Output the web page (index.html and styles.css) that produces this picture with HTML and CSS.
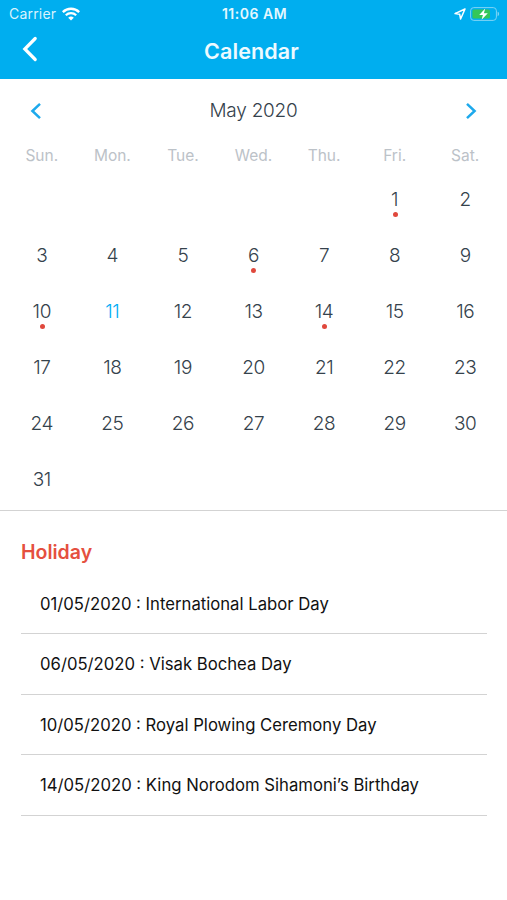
FILE: index.html
```
<!DOCTYPE html>
<html lang="en">
<head>
    <meta charset="UTF-8">
    <meta name="viewport" content="width=device-width, initial-scale=1.0">
    <title>Calendar</title>
    <link rel="stylesheet" href="styles.css">
</head>
<body>
    <header class="header">
        <div class="status-bar">
            <div class="status-left">
                <span class="carrier">Carrier</span>
                <svg class="wifi-icon" viewBox="0 0 18 14" width="18" height="14">
                    <path d="M.8 5.1a11.8 11.8 0 0 1 16.4 0" fill="none" stroke="currentColor" stroke-width="2.5"/>
                    <path d="M3.8 8.3a7.5 7.5 0 0 1 10.4 0" fill="none" stroke="currentColor" stroke-width="2.2"/>
                    <path d="M9 13.6L6.2 10.8a4 4 0 0 1 5.6 0z" fill="currentColor"/>
                </svg>
            </div>
            <span class="clock">11:06 AM</span>
            <div class="status-right">
                <svg class="location-icon" viewBox="0 0 12 12" width="12" height="12">
                    <path d="M11 1L1 5.6l4.7.7.9 4.7z" fill="none" stroke="currentColor" stroke-width="1.5" stroke-linejoin="round"/>
                </svg>
                <svg class="battery-icon" viewBox="0 0 30 14" width="30" height="14">
                    <rect x=".6" y=".6" width="25.8" height="12.8" rx="3.2" fill="none" stroke="#7fd4f5" stroke-width="1"/>
                    <rect x="2.4" y="2.4" width="17.6" height="9.2" rx="1.6" fill="#34c759"/>
                    <path d="M27.6 4.8c2 .6 2 3.8 0 4.4z" fill="#7fd4f5"/>
                    <path d="M15.2 1.4L9.2 7.9h3.7L11.6 12.8 17.8 6.2h-3.9z" fill="#fff"/>
                </svg>
            </div>
        </div>
        <div class="nav-bar">
            <button class="back-button" aria-label="Back">
                <svg viewBox="0 0 16 26" width="16" height="26">
                    <path d="M13.2 2.5L2.8 13l10.4 10.5" fill="none" stroke="currentColor" stroke-width="3.2" stroke-linecap="round"/>
                </svg>
            </button>
            <h1 class="title">Calendar</h1>
        </div>
    </header>

    <main>
        <section class="calendar">
            <div class="month-bar">
                <button class="month-button" aria-label="Previous month">
                    <svg viewBox="0 0 12 18" width="12" height="18">
                        <path d="M10 1.8L2.4 9l7.6 7.2" fill="none" stroke="currentColor" stroke-width="2.5"/>
                    </svg>
                </button>
                <span class="month">May 2020</span>
                <button class="month-button" aria-label="Next month">
                    <svg viewBox="0 0 12 18" width="12" height="18">
                        <path d="M2 1.8L9.6 9 2 16.2" fill="none" stroke="currentColor" stroke-width="2.5"/>
                    </svg>
                </button>
            </div>
            <div class="weekdays">
                <span>Sun.</span>
                <span>Mon.</span>
                <span>Tue.</span>
                <span>Wed.</span>
                <span>Thu.</span>
                <span>Fri.</span>
                <span>Sat.</span>
            </div>
            <div class="days">
                <span class="day first marked">1</span>
                <span class="day">2</span>
                <span class="day">3</span>
                <span class="day">4</span>
                <span class="day">5</span>
                <span class="day marked">6</span>
                <span class="day">7</span>
                <span class="day">8</span>
                <span class="day">9</span>
                <span class="day marked">10</span>
                <span class="day today">11</span>
                <span class="day">12</span>
                <span class="day">13</span>
                <span class="day marked">14</span>
                <span class="day">15</span>
                <span class="day">16</span>
                <span class="day">17</span>
                <span class="day">18</span>
                <span class="day">19</span>
                <span class="day">20</span>
                <span class="day">21</span>
                <span class="day">22</span>
                <span class="day">23</span>
                <span class="day">24</span>
                <span class="day">25</span>
                <span class="day">26</span>
                <span class="day">27</span>
                <span class="day">28</span>
                <span class="day">29</span>
                <span class="day">30</span>
                <span class="day">31</span>
            </div>
        </section>

        <section class="holidays">
            <h2 class="holidays-title">Holiday</h2>
            <ul class="holiday-list">
                <li>01/05/2020 : International Labor Day</li>
                <li>06/05/2020 : Visak Bochea Day</li>
                <li>10/05/2020 : Royal Plowing Ceremony Day</li>
                <li>14/05/2020 : King Norodom Sihamoni’s Birthday</li>
            </ul>
        </section>
    </main>
</body>
</html>
```
FILE: styles.css
```
* {
    margin: 0;
    padding: 0;
    box-sizing: border-box;
}

body {
    font-family: Inter, "Liberation Sans", sans-serif;
    background: #fff;
    min-height: 100vh;
}

button {
    border: none;
    background: none;
    cursor: pointer;
}

svg {
    display: block;
}

.header {
    height: 79px;
    background: #00aeef;
    color: #fff;
}

.status-bar {
    display: grid;
    grid-template-columns: 1fr auto 1fr;
    align-items: center;
    height: 27px;
    padding: 0 7px 0 9px;
    font-size: 14px;
}

.status-left,
.status-right {
    display: flex;
    align-items: center;
}

.status-left {
    gap: 6px;
}

.status-right {
    justify-content: flex-end;
    gap: 4px;
}

.carrier {
    letter-spacing: 0.2px;
    color: #d9f3fd;
}

.clock {
    font-size: 14px;
    font-weight: 600;
    letter-spacing: 0.5px;
    color: #e4f7fe;
}

.nav-bar {
    display: grid;
    grid-template-columns: 1fr auto 1fr;
    align-items: center;
    height: 48px;
    padding: 0 26px 0 22px;
}

.back-button {
    justify-self: start;
    padding-bottom: 4px;
    color: #fff;
}

.title {
    font-size: 21.5px;
    font-weight: 600;
    letter-spacing: 0.1px;
    color: #eefaff;
}

.calendar {
    height: 432px;
    border-bottom: 1px solid #d3d3d3;
}

.month-bar {
    display: flex;
    align-items: center;
    justify-content: space-between;
    height: 63px;
    padding: 0 30px;
}

.month-button {
    color: #1da9ec;
}

.month {
    font-size: 19px;
    font-weight: 300;
    letter-spacing: -0.25px;
    color: #35424c;
}

.weekdays,
.days {
    display: grid;
    grid-template-columns: repeat(7, 1fr);
    padding: 0 6.5px;
    text-align: center;
}

.weekdays {
    height: 29px;
    line-height: 28px;
    font-size: 15.5px;
    color: #bcc2c8;
}

.days {
    grid-auto-rows: 56.05px;
}

.day {
    position: relative;
    line-height: 57px;
    font-size: 19px;
    font-weight: 300;
    letter-spacing: -0.4px;
    color: #35424c;
}

.day.first {
    grid-column-start: 6;
}

.day.today {
    color: #00adf5;
}

.day.marked::after {
    content: "";
    position: absolute;
    left: 50%;
    bottom: 10px;
    width: 5px;
    height: 5px;
    margin-left: -2px;
    border-radius: 50%;
    background: #e0483c;
}

.holidays {
    padding: 29px 20px 0 21px;
}

.holidays-title {
    line-height: 24px;
    font-size: 19.5px;
    font-weight: 600;
    color: #e5503f;
}

.holiday-list {
    list-style: none;
    padding-top: 9.5px;
}

.holiday-list li {
    height: 60.6px;
    padding-left: 19px;
    line-height: 61px;
    font-size: 16.7px;
    color: #111;
    border-bottom: 1px solid #d3d3d3;
}
```
